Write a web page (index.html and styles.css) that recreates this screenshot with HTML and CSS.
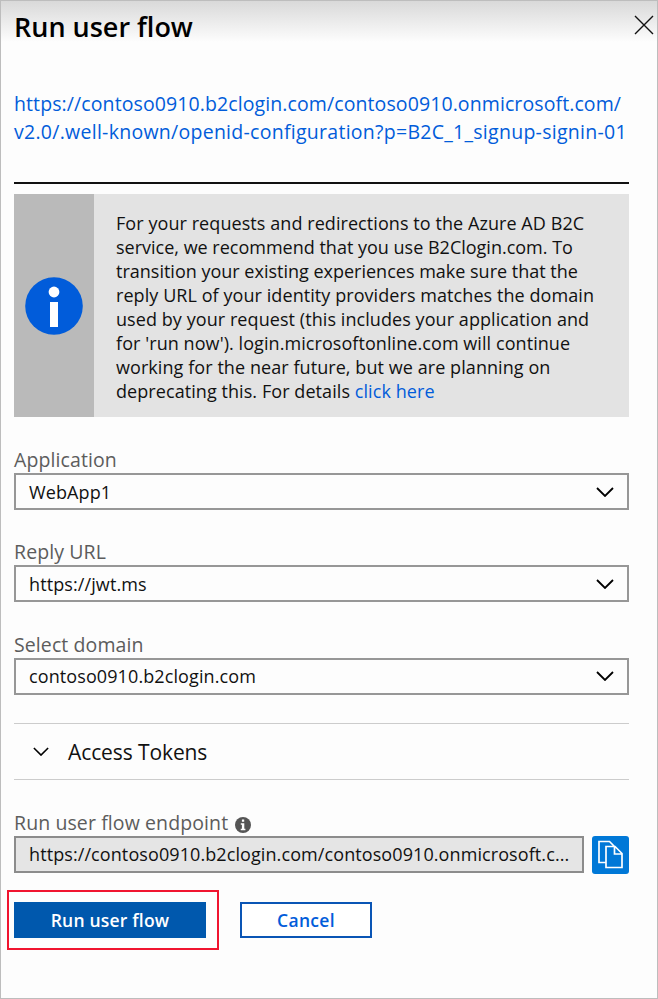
FILE: index.html
```html
<!DOCTYPE html>
<html lang="en">
<head>
<meta charset="utf-8">
<title>Run user flow</title>
<link rel="stylesheet" href="styles.css">
</head>
<body>
<main class="panel">
  <header class="header">
    <h1 class="title">Run user flow</h1>
    <svg class="close" viewBox="0 0 20 20"><path d="M1 1 19 19M19 1 1 19"/></svg>
  </header>
  <a class="metadata">https://contoso0910.b2clogin.com/contoso0910.onmicrosoft.com/<br><span class="metadata-path">v2.0/.well-known/openid-configuration?p=B2C_1_signup-signin-01</span></a>
  <section class="notice">
    <div class="notice-side"><svg class="notice-icon" viewBox="0 0 58 58"><circle class="disc" cx="29" cy="29" r="28.8"/><circle cx="29" cy="15" r="5.4"/><path d="M25 25h8v25h-8z"/></svg></div>
    <p class="notice-text">For your requests and redirections to the Azure AD B2C<br><span class="tight">service, we recommend that you use B2Clogin.com. To</span><br><span class="tight">transition your existing experiences make sure that the</span><br>reply URL of your identity providers matches the domain<br>used by your request (this includes your application and<br>for 'run now'). login.microsoftonline.com will continue<br>working for the near future, but we are planning on<br>deprecating this. For details <a class="link">click here</a></p>
  </section>
  <div class="field">
    <label class="label">Application</label>
    <div class="select"><span>WebApp1</span><svg class="chevron" viewBox="0 0 18 10"><path d="M1 1l8 8 8-8"/></svg></div>
  </div>
  <div class="field">
    <label class="label">Reply URL</label>
    <div class="select"><span>https://jwt.ms</span><svg class="chevron" viewBox="0 0 18 10"><path d="M1 1l8 8 8-8"/></svg></div>
  </div>
  <div class="field">
    <label class="label">Select domain</label>
    <div class="select"><span>contoso0910.b2clogin.com</span><svg class="chevron" viewBox="0 0 18 10"><path d="M1 1l8 8 8-8"/></svg></div>
  </div>
  <section class="tokens"><svg class="chevron small" viewBox="0 0 18 10"><path d="M1 1l8 8 8-8"/></svg><span>Access Tokens</span></section>
  <div class="endpoint-label"><span>Run user flow endpoint</span><svg class="hint" viewBox="0 0 16 16"><circle class="disc" cx="8" cy="8" r="8"/><path d="M6.900 2.600h2.300v2.200H6.900zM5.800 6.300h3.500v5.400h1.100v1.500H5.700v-1.500h1.200V7.800H5.800z"/></svg></div>
  <div class="endpoint">
    <div class="readonly">https://contoso0910.b2clogin.com/contoso0910.onmicrosoft.c...</div>
    <button class="copy"><svg viewBox="0 0 37 38"><path d="M13.500 26.500H7V5.500h10.500l5 5M14 10.500h9l7 7v14H14zM22.500 10.500v7.500H30"/></svg></button>
  </div>
  <div class="actions">
    <div class="highlight"><button class="primary">Run user flow</button></div>
    <button class="secondary">Cancel</button>
  </div>
</main>
</body>
</html>
```
FILE: styles.css
```css
* { box-sizing: border-box; }
body { margin: 0; font-family: "Open Sans", sans-serif; color: #111; }
.panel { width: 658px; height: 999px; border: 1px solid #bdbdbd; padding: 0 28px 0 13px; background: #fdfdfd linear-gradient(#d9d9d9, #fdfdfd 41px) no-repeat; overflow: hidden; }
.header { display: flex; justify-content: space-between; height: 88px; margin-right: -25px; }
.title { margin: 7px 0 0; font-size: 27px; line-height: 38px; font-weight: 550; color: #000; }
.close { width: 20px; height: 20px; margin-top: 14px; fill: none; stroke: #111; stroke-width: 1.4; }
.metadata { display: block; height: 95px; padding-top: 1px; border-bottom: 2px solid #111; font-size: 19.500px; line-height: 28px; letter-spacing: 0.1px; white-space: nowrap; color: #015cda; }
.metadata-path { letter-spacing: 0.275px; }
.notice { display: flex; height: 223px; margin-top: 10px; background: #e3e3e3; }
.notice-side { display: flex; align-items: center; justify-content: center; width: 80px; background: #bababa; }
.notice-icon { width: 58px; height: 58px; fill: #fff; }
.notice-icon .disc { fill: #015cda; }
.notice-text { margin: 17px 0 0 22px; font-size: 18px; line-height: 24px; letter-spacing: 0.07px; white-space: nowrap; }
.tight { letter-spacing: 0; }
.link { color: #015cda; }
.field { height: 92.400px; }
.notice + .field { margin-top: 30px; }
.label { display: block; height: 26px; font-size: 19.500px; line-height: 26px; letter-spacing: 0.1px; color: #5c5c5c; }
.select { display: flex; align-items: center; justify-content: space-between; height: 37px; border: 2px solid #979797; padding: 0 13px; font-size: 18px; letter-spacing: 0.1px; }
.chevron { width: 18px; height: 10px; fill: none; stroke: #000; stroke-width: 1.8; }
.tokens { display: flex; align-items: center; height: 57px; margin-top: -1px; border: solid #ccc; border-width: 1px 0; padding-left: 19px; gap: 19px; font-size: 21px; letter-spacing: -0.1px; }
.small { width: 16px; height: 9px; }
.endpoint-label { display: flex; align-items: center; margin-top: 29px; height: 27px; padding-bottom: 1px; font-size: 19.500px; letter-spacing: 0.1px; color: #5c5c5c; }
.hint { width: 16px; height: 16px; margin: 5px 0 0 7px; fill: #fff; }
.hint .disc { fill: #555; }
.endpoint { display: flex; gap: 8px; }
.readonly { display: flex; align-items: center; width: 570px; height: 37px; padding: 0 0 2px 13px; border: 2px solid #8c8c8c; background: #e5e5e5; font-size: 18px; letter-spacing: 0.09px; }
button { font-family: inherit; padding: 0; }
.copy { width: 37px; height: 38px; border: 0; border-radius: 3px; background: #0078d7; }
.copy svg { display: block; width: 37px; height: 38px; fill: none; stroke: #fff; stroke-width: 1.7; }
.actions { display: flex; align-items: center; gap: 21px; margin: 16px 0 0 -7px; }
.highlight { width: 212px; height: 60px; border: 2px solid #f0142f; padding: 10px 5px; }
.primary { display: block; width: 192px; height: 36px; border: 0; background: #0058ad; color: #fff; font-size: 17.500px; font-weight: 650; letter-spacing: 0.2px; }
.secondary { width: 132px; height: 36px; border: 2px solid #0a55b5; background: #fff; color: #015cda; font-size: 17.500px; font-weight: 600; letter-spacing: 0.3px; }
```
